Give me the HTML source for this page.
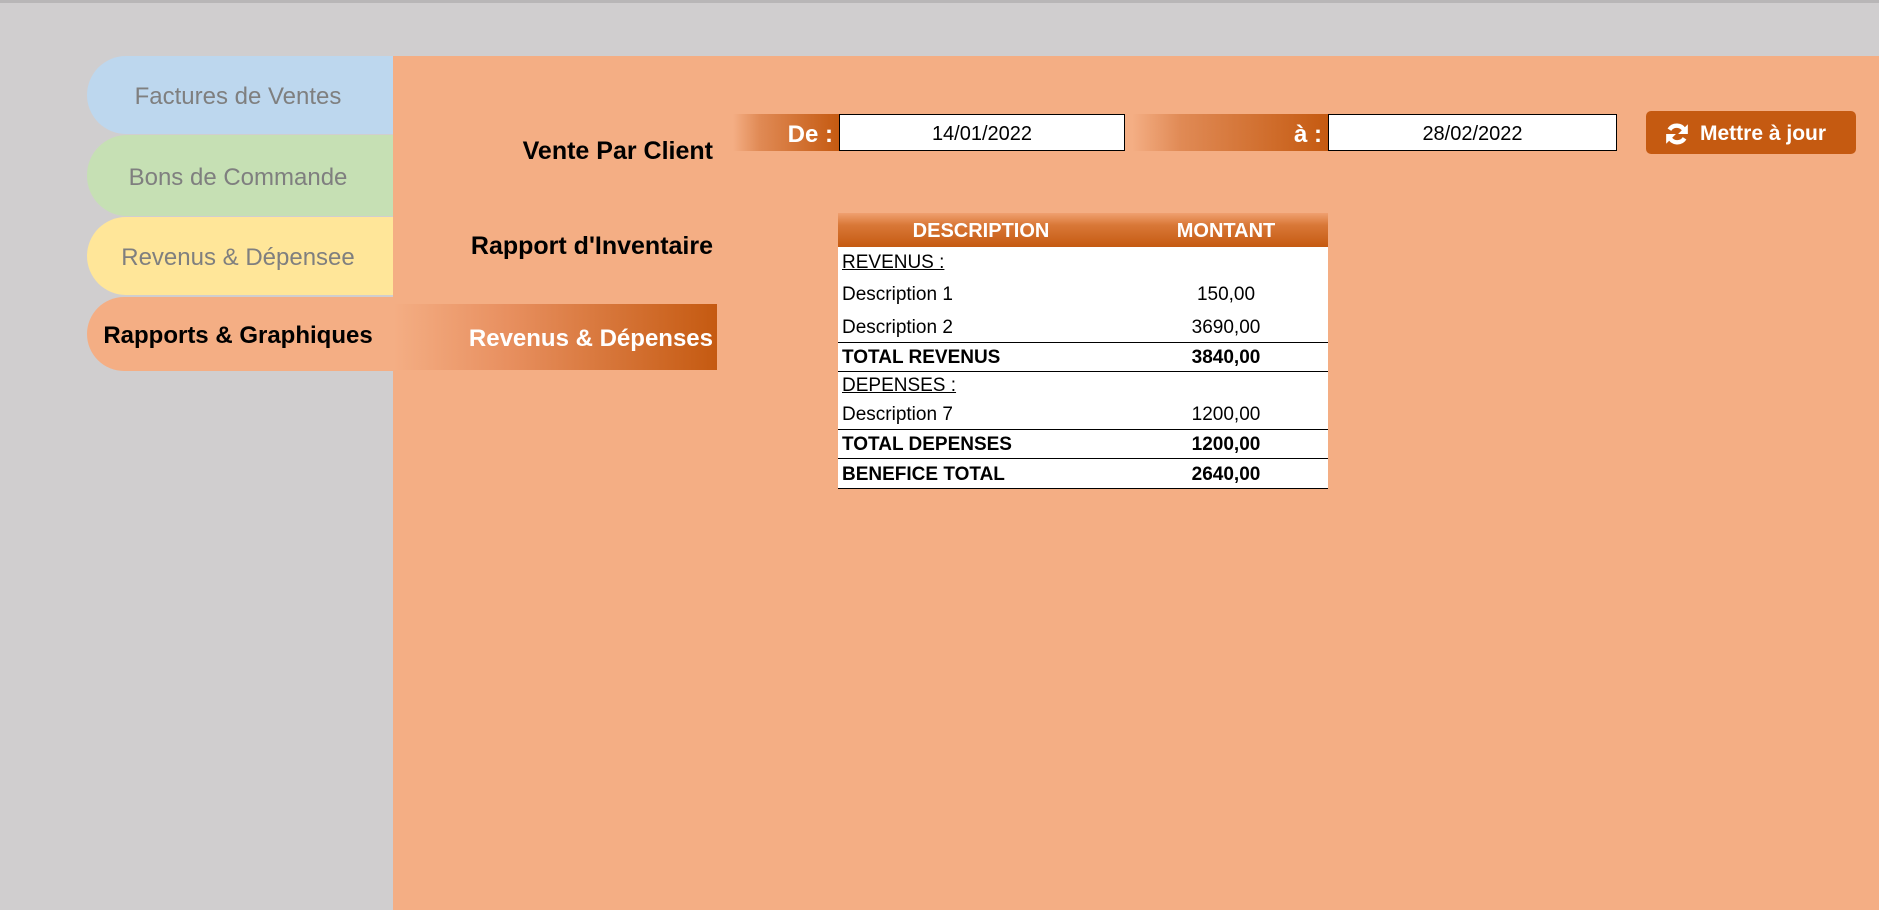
<!DOCTYPE html>
<html><head><meta charset="utf-8"><style>
*{margin:0;padding:0;box-sizing:border-box}
body{width:1879px;height:910px;background:#d0cecf;position:relative;overflow:hidden;font-family:"Liberation Sans",sans-serif}
.a{position:absolute}
.top{left:0;top:0;width:1879px;height:3px;background:#b8b6b7}
.panel{left:393px;top:56px;width:1486px;height:854px;background:#f4ae84}
.tab{position:absolute;left:87px;width:306px;border-radius:40px 0 0 40px;display:flex;align-items:center;justify-content:center;font-size:24px;color:#7f7f7f;padding-right:4px;padding-top:4px}
.lbl{position:absolute;right:1166px;font-size:25px;font-weight:bold;color:#000;white-space:nowrap}
.band{position:absolute;display:flex;align-items:center;justify-content:flex-end;color:#fff;font-weight:bold;font-size:24px;padding-right:6px;padding-top:4px;background:linear-gradient(90deg,rgba(197,90,17,0) 0%,#e08a55 25%,#c55a11 100%)}
.date{position:absolute;background:#fff;border:1px solid #000;display:flex;align-items:center;justify-content:center;font-size:20px;color:#000;padding-top:4px}
table{position:absolute;left:838px;top:213px;width:490px;border-collapse:collapse;font-size:19px;color:#000}
td{padding:3px 0 0 4px;height:24px;background:#fff}
td.m{text-align:center;padding:3px 0 0 0}
th{height:34px;color:#fff;font-weight:bold;font-size:20px;padding-top:3px;background:linear-gradient(180deg,#f0a070 0%,#d97838 35%,#c55a11 100%)}
tr.b td{font-weight:bold}
tr.bt td{border-bottom:1.5px solid #000}
</style></head><body>
<div class="a top"></div>
<div class="a panel"></div>
<div class="tab" style="top:56px;height:78px;background:#bdd7ee">Factures de Ventes</div>
<div class="tab" style="top:135px;height:81px;background:#c6e0b4">Bons de Commande</div>
<div class="tab" style="top:217px;height:78px;background:#ffe699">Revenus &amp; Dépensee</div>
<div class="tab" style="top:297px;height:74px;background:#f4ae84;color:#000;font-weight:bold">Rapports &amp; Graphiques</div>
<div class="lbl" style="top:137px">Vente Par Client</div>
<div class="lbl" style="top:232px">Rapport d'Inventaire</div>
<div class="band" style="left:393px;top:304px;width:324px;height:66px;background:linear-gradient(90deg,rgba(244,174,132,0) 0%,#e89060 35%,#c55a11 100%);justify-content:flex-end;padding-right:4px">Revenus &amp; Dépenses</div>
<div class="band" style="left:733px;top:114px;width:106px;height:37px">De :</div>
<div class="date" style="left:839px;top:114px;width:286px;height:37px">14/01/2022</div>
<div class="band" style="left:1132px;top:114px;width:196px;height:37px">à :</div>
<div class="date" style="left:1328px;top:114px;width:289px;height:37px">28/02/2022</div>
<div class="a" style="left:1646px;top:111px;width:210px;height:43px;background:#c55a11;border-radius:5px;display:flex;align-items:center;color:#fff;font-weight:bold;font-size:21px;padding-top:2px">
<svg width="26" height="26" viewBox="0 0 24 24" style="margin:0 10px 0 18px"><path d="M19 9A8 8 0 0 0 5 8" stroke="#fff" stroke-width="4" fill="none"/><path d="M22 3v9h-9z" fill="#fff"/><path d="M5 15a8 8 0 0 0 14 1" stroke="#fff" stroke-width="4" fill="none"/><path d="M2 21v-9h9z" fill="#fff"/></svg>Mettre à jour</div>
<table>
<tr><th style="width:286px">DESCRIPTION</th><th>MONTANT</th></tr>
<tr><td style="height:28px"><u>REVENUS :</u></td><td></td></tr>
<tr><td style="height:36px">Description 1</td><td class="m">150,00</td></tr>
<tr class="bt"><td style="height:31px">Description 2</td><td class="m">3690,00</td></tr>
<tr class="b bt"><td style="height:29px">TOTAL REVENUS</td><td class="m">3840,00</td></tr>
<tr><td style="height:27px"><u>DEPENSES :</u></td><td></td></tr>
<tr class="bt"><td style="height:31px">Description 7</td><td class="m">1200,00</td></tr>
<tr class="b bt"><td style="height:29px">TOTAL DEPENSES</td><td class="m">1200,00</td></tr>
<tr class="b bt"><td style="height:30px">BENEFICE TOTAL</td><td class="m">2640,00</td></tr>
</table>
</body></html>
